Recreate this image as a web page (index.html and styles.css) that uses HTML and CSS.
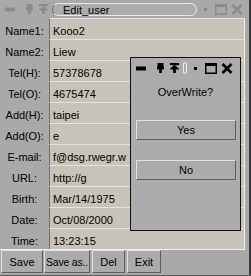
FILE: index.html
```html
<!DOCTYPE html>
<html lang="en">
    <head>
        <meta charset="UTF-8" />
        <title>Edit_user</title>
        <link rel="stylesheet" href="styles.css">
    </head>

    <body>
        <div class="window">
            <div class="titlebar inactive">
                <svg class="ic-min" width="10" height="12" viewBox="0 0 10 12"><rect x="0" y="5" width="10" height="3"/></svg>
                <svg class="ic-pin" width="7" height="10" viewBox="0 0 7 10"><rect x="1" y="0" width="5" height="4"/><rect x="0" y="4" width="7" height="2"/><rect x="2.7" y="6" width="1.6" height="4"/></svg>
                <svg class="ic-pinup" width="9" height="10" viewBox="0 0 9 10"><rect x="0" y="0" width="9" height="1.6"/><polygon points="4.5,2 0.5,6 8.5,6"/><rect x="3.7" y="6" width="1.6" height="4"/></svg>
                <div class="title-pill">Edit_user</div>
                <svg class="ic-dot" width="3" height="3" viewBox="0 0 3 3"><rect width="3" height="3"/></svg>
                <svg class="ic-max" width="12" height="11" viewBox="0 0 12 11"><rect x="0.75" y="1" width="10.5" height="9.25" fill="none" stroke-width="1.5"/><rect x="0" y="0" width="12" height="2.5"/></svg>
                <svg class="ic-close" width="12" height="11" viewBox="0 0 12 11"><path d="M1.5 1 L10.5 10 M10.5 1 L1.5 10" fill="none" stroke-width="2.8"/></svg>
            </div>

            <div class="form">
                <div class="row"><span class="label">Name1:</span><div class="field">Kooo2</div></div>
                <div class="row"><span class="label">Name2:</span><div class="field">Liew</div></div>
                <div class="row"><span class="label">Tel(H):</span><div class="field">57378678</div></div>
                <div class="row"><span class="label">Tel(O):</span><div class="field">4675474</div></div>
                <div class="row"><span class="label">Add(H):</span><div class="field">taipei</div></div>
                <div class="row"><span class="label">Add(O):</span><div class="field">e</div></div>
                <div class="row"><span class="label">E-mail:</span><div class="field">f@dsg.rwegr.w</div></div>
                <div class="row"><span class="label">URL:</span><div class="field">http://g</div></div>
                <div class="row"><span class="label">Birth:</span><div class="field">Mar/14/1975</div></div>
                <div class="row"><span class="label">Date:</span><div class="field">Oct/08/2000</div></div>
                <div class="row"><span class="label">Time:</span><div class="field">13:23:15</div></div>
            </div>

            <div class="buttons">
                <button class="btn btn-save">Save</button>
                <button class="btn btn-saveas">Save as..</button>
                <button class="btn btn-del">Del</button>
                <button class="btn btn-exit">Exit</button>
            </div>

            <!-- confirm dialog on top of the form -->
            <div class="dialog">
                <div class="titlebar active">
                    <svg class="ic-min" width="10" height="12" viewBox="0 0 10 12"><rect x="0" y="5" width="10" height="3"/></svg>
                    <svg class="ic-pin" width="7" height="10" viewBox="0 0 7 10"><rect x="1" y="0" width="5" height="4"/><rect x="0" y="4" width="7" height="2"/><rect x="2.7" y="6" width="1.6" height="4"/></svg>
                    <svg class="ic-pinup" width="9" height="10" viewBox="0 0 9 10"><rect x="0" y="0" width="9" height="1.6"/><polygon points="4.5,2 0.5,6 8.5,6"/><rect x="3.7" y="6" width="1.6" height="4"/></svg>
                    <div class="title-pill empty"></div>
                    <svg class="ic-dot" width="3" height="3" viewBox="0 0 3 3"><rect width="3" height="3"/></svg>
                    <svg class="ic-max" width="12" height="11" viewBox="0 0 12 11"><rect x="0.75" y="1" width="10.5" height="9.25" fill="none" stroke-width="1.5"/><rect x="0" y="0" width="12" height="2.5"/></svg>
                    <svg class="ic-close" width="12" height="11" viewBox="0 0 12 11"><path d="M1.5 1 L10.5 10 M10.5 1 L1.5 10" fill="none" stroke-width="2.8"/></svg>
                </div>
                <p class="question">OverWrite?</p>
                <button class="btn dlg-btn">Yes</button>
                <button class="btn dlg-btn">No</button>
            </div>
        </div>
    </body>
</html>
```

FILE: styles.css
```css
body {
    margin: 0;
    padding: 0;
    font-family: "Liberation Sans", Arial, sans-serif;
    font-size: 11px;
    color: #000;
    background-color: #a9a9a9;
}

.window {
    position: relative;
    width: 251px;
    height: 276px;
    box-sizing: border-box;
    background-color: #a9a9a9;
    border-right: 2px solid #3a3a3a;
    border-bottom: 1px solid #5a5a5a;
    overflow: hidden;
}

/* title bar */
.titlebar {
    display: flex;
    align-items: center;
    height: 17px;
    padding-left: 5px;
    padding-top: 1px;
    box-sizing: border-box;
}

.titlebar svg {
    flex: none;
}

.inactive svg {
    fill: #8b8b8b;
    stroke: #8b8b8b;
}

.active svg {
    fill: #000;
    stroke: #000;
}

.ic-pin {
    margin-left: 11px;
}

.ic-pinup {
    margin-left: 6px;
}

.title-pill {
    margin-left: 4px;
    width: 145px;
    height: 13px;
    line-height: 12px;
    box-sizing: border-box;
    padding-left: 10px;
    border: 1px solid #e8e8e8;
    border-left-color: #6e6e6e;
    border-radius: 7px;
    background-color: #acacac;
    font-size: 11px;
}

.title-pill.empty {
    width: 4px;
    height: 12px;
    padding: 0;
    border-radius: 2px;
    border-color: #f0f0f0;
}

.ic-dot {
    margin-left: 7px;
}

.ic-max {
    margin-left: 8px;
}

.ic-close {
    margin-left: 4px;
}

/* form */
.form {
    width: 244px;
    border-right: 1px solid #f2f2f2;
    border-bottom: 1px solid #f2f2f2;
    margin-top: 1px;
}

.row {
    display: flex;
    height: 21px;
}

.label {
    width: 49px;
    text-align: center;
    line-height: 21px;
    padding-top: 3px;
    box-sizing: border-box;
    overflow: hidden;
}

.field {
    flex: 1;
    background-color: #c8c3b8;
    border-top: 1px solid #e6e2da;
    border-left: 1px solid #6f6f6f;
    padding-left: 3px;
    padding-top: 2px;
    line-height: 21px;
    box-sizing: border-box;
    overflow: hidden;
    white-space: nowrap;
}

/* buttons */
.buttons {
    display: flex;
    padding-left: 1px;
}

.btn {
    font-family: "Liberation Sans", Arial, sans-serif;
    font-size: 11px;
    color: #000;
    background-color: #ababab;
    border: 1px solid;
    border-color: #e2e2e2 #5e5e5e #5e5e5e #e2e2e2;
    padding: 0;
    margin: 0;
    height: 23px;
    white-space: nowrap;
    overflow: visible;
}

.btn-save {
    width: 42px;
}

.btn-saveas {
    width: 46px;
    margin-left: 1px;
    font-size: 10.5px;
    letter-spacing: -0.2px;
}

.btn-del {
    width: 33px;
    margin-left: 2px;
}

.btn-exit {
    width: 34px;
    margin-left: 2px;
}

/* dialog */
.dialog {
    position: absolute;
    left: 130px;
    top: 57px;
    width: 111px;
    height: 174px;
    box-sizing: border-box;
    border: 1px solid #111;
    background-color: #ababab;
    display: flex;
    flex-direction: column;
    align-items: center;
}

.dialog .titlebar {
    align-self: stretch;
    height: 18px;
    padding-top: 2px;
}

.question {
    margin: 10px 0 0 0;
    line-height: 13px;
}

.dlg-btn {
    width: 100px;
    height: 20px;
    margin-top: 21px;
    margin-left: 1px;
}

.dlg-btn + .dlg-btn {
    margin-top: 20px;
}
```
